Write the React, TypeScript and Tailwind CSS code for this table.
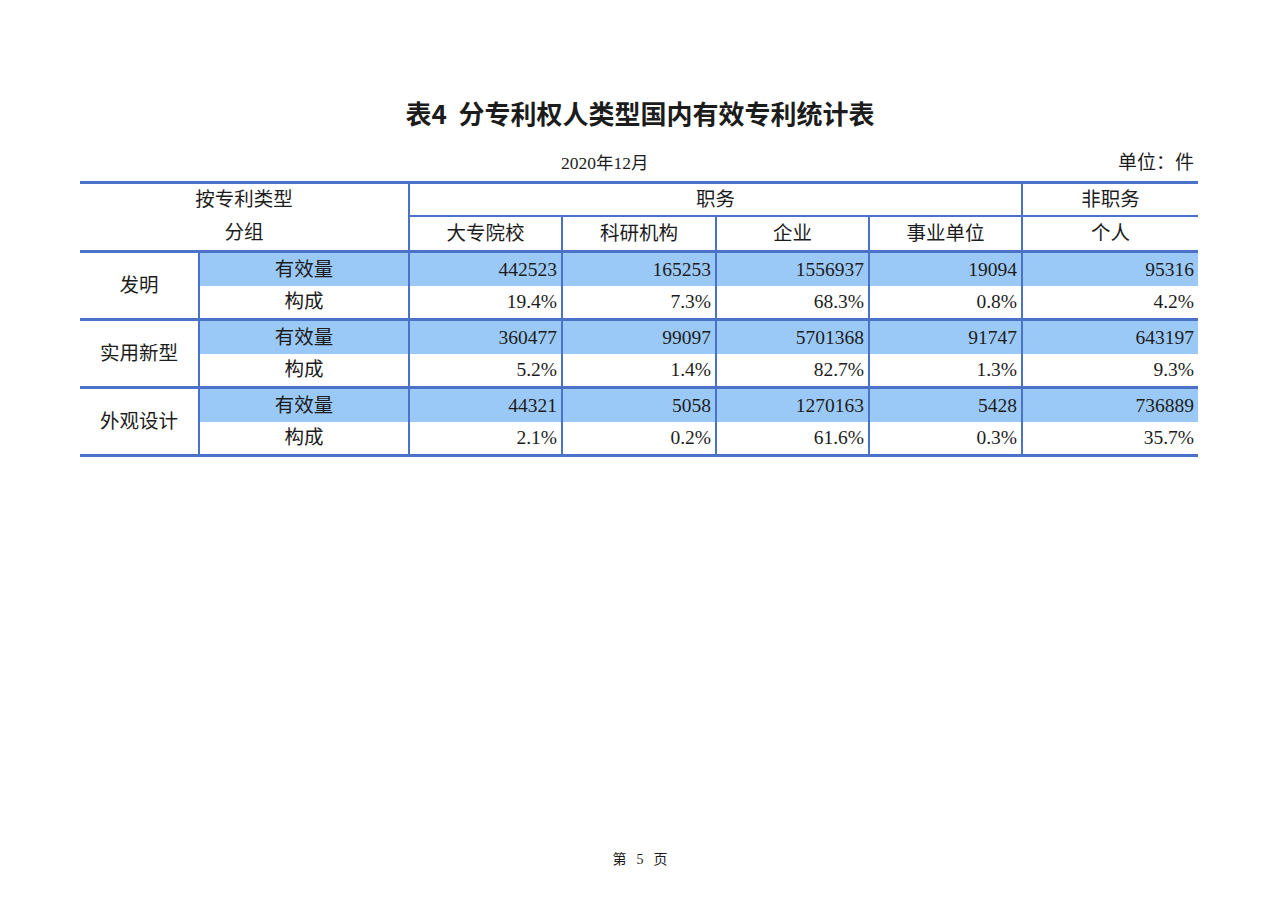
import React from "react";

const FONT = { fontFamily: '"Liberation Serif", "Noto Sans CJK SC", serif' };

const GROUPS = [
  {
    name: "发明",
    count: ["442523", "165253", "1556937", "19094", "95316"],
    share: ["19.4%", "7.3%", "68.3%", "0.8%", "4.2%"],
  },
  {
    name: "实用新型",
    count: ["360477", "99097", "5701368", "91747", "643197"],
    share: ["5.2%", "1.4%", "82.7%", "1.3%", "9.3%"],
  },
  {
    name: "外观设计",
    count: ["44321", "5058", "1270163", "5428", "736889"],
    share: ["2.1%", "0.2%", "61.6%", "0.3%", "35.7%"],
  },
];

export default function App() {
  return (
    <div className="min-h-[904px] w-[1280px] bg-white text-[#1c1c1c] flex flex-col" style={FONT}>
      {/* 标题 */}
      <div className="pt-[95px] h-[131px] text-center">
        <h1
          className="text-[26px] leading-[36px] font-bold whitespace-pre"
          style={{ fontFamily: '"Noto Sans CJK SC", "Liberation Sans", sans-serif' }}
        >
          {"表4  分专利权人类型国内有效专利统计表"}
        </h1>
      </div>

      {/* 日期 / 单位 */}
      <div className="mt-[20px] mx-[80px] w-[1118px] flex items-center h-[24px]">
        <div className="ml-[481px] text-[17.5px] leading-[24px]">2020年12月</div>
        <div className="flex-1" />
        <div className="text-[19px] leading-[24px] pr-[4px]">单位：件</div>
      </div>

      <div className="mx-[80px] mt-[6px]">
        <table className="table-fixed w-[1118px] border-collapse text-[19.5px] leading-none border-t-[3px] border-b-[3px] border-[#4a72c8]">
          <colgroup>
            <col className="w-[119px]" />
            <col className="w-[210px]" />
            <col className="w-[153px]" />
            <col className="w-[154px]" />
            <col className="w-[153px]" />
            <col className="w-[153px]" />
            <col className="w-[176px]" />
          </colgroup>
          <thead>
            <tr className="h-[33px]">
              <th colSpan={2} className="font-normal text-center border-r-2 border-[#4a72c8]">按专利类型</th>
              <th colSpan={4} className="font-normal text-center border-r-2 border-b-2 border-[#4a72c8]">职务</th>
              <th className="font-normal text-center border-b-2 border-[#4a72c8]">非职务</th>
            </tr>
            <tr className="h-[36px] border-b-[3px] border-[#4a72c8]">
              <th colSpan={2} className="font-normal text-center border-r-2 border-[#4a72c8]">分组</th>
              {["大专院校", "科研机构", "企业", "事业单位"].map((h) => (
                <th key={h} className="font-normal text-center border-r-2 border-[#4a72c8]">{h}</th>
              ))}
              <th className="font-normal text-center">个人</th>
            </tr>
          </thead>
          <tbody>
            {GROUPS.map((g, gi) => (
              <React.Fragment key={g.name}>
                <tr className={"h-[34px] " + (gi > 0 ? "border-t-[3px] border-[#4a72c8]" : "")}>
                  <td rowSpan={2} className="text-center border-r-2 border-[#4a72c8]">{g.name}</td>
                  <td className="text-center bg-[#9bc9f7] border-r-2 border-[#4a72c8]">有效量</td>
                  {g.count.map((v, i) => (
                    <td
                      key={i}
                      className={
                        "text-right pr-[4px] bg-[#9bc9f7] " + (i < 4 ? "border-r-2 border-[#4a72c8]" : "")
                      }
                    >
                      {v}
                    </td>
                  ))}
                </tr>
                <tr className="h-[34px]">
                  <td className="text-center border-r-2 border-[#4a72c8]">构成</td>
                  {g.share.map((v, i) => (
                    <td
                      key={i}
                      className={"text-right pr-[4px] " + (i < 4 ? "border-r-2 border-[#4a72c8]" : "")}
                    >
                      {v}
                    </td>
                  ))}
                </tr>
              </React.Fragment>
            ))}
          </tbody>
        </table>
      </div>

      <div className="flex-1" />
      <div className="flex justify-center gap-[10px] text-[14px] leading-[20px] mb-[34px]">
        <span>第</span>
        <span>5</span>
        <span>页</span>
      </div>
    </div>
  );
}
